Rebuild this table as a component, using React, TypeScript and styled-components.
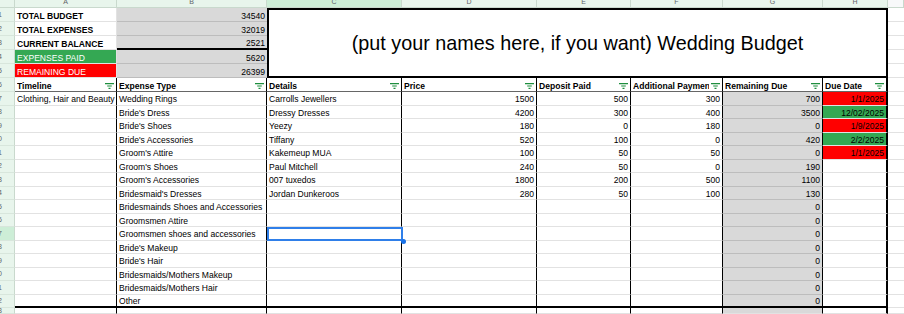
import React from 'react';
import styled, { createGlobalStyle, css } from 'styled-components';

const GlobalStyle = createGlobalStyle`
  html, body { margin: 0; padding: 0; background: #fff; }
  body { font-family: "Liberation Sans", Arial, sans-serif; }
`;

const GRID = '#e2e2e2';
const GREY_LINE = '#bdbdbd';
const GREY_BG = '#d9d9d9';
const GREEN = '#34a853';
const RED = '#ff0000';
const HEAD_BG = '#e8f5ec';
const HEAD_ACTIVE = '#cdeed7';
const HEAD_LINE = '#c9d9cd';

const Sheet = styled.div`
  display: grid;
  grid-template-columns: 15px 102px 150px 135px 135px 94px 92px 100px 65px 1fr;
  grid-template-rows: 8px repeat(6, 14px) repeat(16, 13.5px) 1fr;
  width: 904px;
  height: 314px;
  overflow: hidden;
  font-family: "Liberation Sans", Arial, sans-serif;
  color: #000;
  background: #fff;
`;

const ColHead = styled.div<{ $active?: boolean; $plain?: boolean }>`
  box-sizing: border-box;
  background: ${p => (p.$plain ? '#f8f9fa' : p.$active ? HEAD_ACTIVE : HEAD_BG)};
  border-right: 1px solid ${HEAD_LINE};
  border-bottom: 1px solid ${HEAD_LINE};
  display: flex;
  justify-content: center;
  align-items: flex-start;
  overflow: hidden;
  font-size: 7px;
  line-height: 7px;
  color: #5f6368;
`;

const ColLetter = styled.span`
  margin-top: -2.5px;
`;

const RowHead = styled.div<{ $active?: boolean }>`
  box-sizing: border-box;
  background: ${p => (p.$active ? HEAD_ACTIVE : HEAD_BG)};
  border-right: 1px solid ${HEAD_LINE};
  border-bottom: 1px solid #d8e6dc;
  display: flex;
  justify-content: flex-end;
  align-items: center;
  padding-right: 12px;
  overflow: hidden;
  white-space: nowrap;
  font-size: 7px;
  color: #5f6368;
`;

type CellProps = {
  $bg?: string;
  $align?: 'left' | 'right';
  $bold?: boolean;
  $color?: string;
  $right?: string;
  $bottom?: string;
  $selected?: boolean;
};

const Cell = styled.div<CellProps>`
  box-sizing: border-box;
  display: flex;
  align-items: flex-end;
  justify-content: ${p => (p.$align === 'right' ? 'flex-end' : 'flex-start')};
  padding: 0 2px 0.5px 2px;
  min-width: 0;
  background: ${p => p.$bg || '#fff'};
  color: ${p => p.$color || '#000'};
  font-weight: ${p => (p.$bold ? 700 : 400)};
  font-size: 8.57px;
  white-space: nowrap;
  overflow: hidden;
  border-right: ${p => p.$right || `1px solid ${GRID}`};
  border-bottom: ${p => p.$bottom || `1px solid ${GRID}`};
  ${p =>
    p.$selected &&
    css`
      position: relative;
      overflow: visible;
      z-index: 2;
      &::before {
        content: '';
        position: absolute;
        left: 0;
        top: 0;
        right: -1.5px;
        bottom: -1px;
        border: 2px solid #2f7fe9;
        pointer-events: none;
      }
      &::after {
        content: '';
        position: absolute;
        width: 5px;
        height: 5px;
        border-radius: 50%;
        background: #1a73e8;
        right: -4.5px;
        bottom: -4px;
      }
    `}
`;

const Title = styled.div`
  grid-column: span 6;
  grid-row: span 5;
  box-sizing: border-box;
  border: 2px solid #000;
  display: flex;
  align-items: center;
  justify-content: center;
  font-size: 19.8px;
  white-space: nowrap;
  background: #fff;
`;

const HeadLabel = styled.span`
  flex: 1;
  min-width: 0;
  overflow: hidden;
  white-space: nowrap;
`;

const FilterSvg = styled.svg`
  flex: none;
  display: block;
  margin: 0 0 2px 2px;
`;

const FilterIcon = () => (
  <FilterSvg viewBox="0 0 9 6" width="9" height="6">
    <path d="M0 0.6h9M2.2 3h4.6M3.5 5.4h2" stroke="#1e8e3e" strokeWidth="1.2" fill="none" />
  </FilterSvg>
);

const LETTERS = ['A', 'B', 'C', 'D', 'E', 'F', 'G', 'H'];

const summary = [
  { label: 'TOTAL BUDGET', value: '34540', kind: 'plain' },
  { label: 'TOTAL EXPENSES', value: '32019', kind: 'plain' },
  { label: 'CURRENT BALANCE', value: '2521', kind: 'plain' },
  { label: 'EXPENSES PAID', value: '5620', kind: 'paid' },
  { label: 'REMAINING DUE', value: '26399', kind: 'due' },
];

const headers = [
  'Timeline',
  'Expense Type',
  'Details',
  'Price',
  'Deposit Paid',
  'Additional Payment',
  'Remaining Due',
  'Due Date',
];

type Due = { date: string; ok: boolean } | null;
type Row = { a?: string; b: string; c?: string; d?: string; e?: string; f?: string; g: string; h?: Due };

const rows: Row[] = [
  { a: 'Clothing, Hair and Beauty', b: 'Wedding Rings', c: 'Carrolls Jewellers', d: '1500', e: '500', f: '300', g: '700', h: { date: '1/1/2025', ok: false } },
  { b: "Bride's Dress", c: 'Dressy Dresses', d: '4200', e: '300', f: '400', g: '3500', h: { date: '12/02/2025', ok: true } },
  { b: "Bride's Shoes", c: 'Yeezy', d: '180', e: '0', f: '180', g: '0', h: { date: '1/9/2025', ok: false } },
  { b: "Bride's Accessories", c: 'Tiffany', d: '520', e: '100', f: '0', g: '420', h: { date: '2/2/2025', ok: true } },
  { b: "Groom's Attire", c: 'Kakemeup MUA', d: '100', e: '50', f: '50', g: '0', h: { date: '1/1/2025', ok: false } },
  { b: "Groom's Shoes", c: 'Paul Mitchell', d: '240', e: '50', f: '0', g: '190' },
  { b: "Groom's Accessories", c: '007 tuxedos', d: '1800', e: '200', f: '500', g: '1100' },
  { b: "Bridesmaid's Dresses", c: 'Jordan Dunkeroos', d: '280', e: '50', f: '100', g: '130' },
  { b: 'Bridesmainds Shoes and Accessories', g: '0' },
  { b: 'Groomsmen Attire', g: '0' },
  { b: 'Groomsmen shoes and accessories', g: '0' },
  { b: "Bride's Makeup", g: '0' },
  { b: "Bride's Hair", g: '0' },
  { b: 'Bridesmaids/Mothers Makeup', g: '0' },
  { b: 'Bridesmaids/Mothers Hair', g: '0' },
  { b: 'Other', g: '0' },
];

const BLACK = '1px solid #000';
const THICK = '2px solid #000';
const colRight = (i: number) => (i === 7 ? THICK : BLACK);

export default function App() {
  return (
    <>
      <GlobalStyle />
      <Sheet>
        <ColHead />
        {LETTERS.map(l => (
          <ColHead key={l} $active={l === 'C'}>
            <ColLetter>{l}</ColLetter>
          </ColHead>
        ))}
        <ColHead $plain />

        {summary.map((s, i) => (
          <React.Fragment key={s.label}>
            <RowHead>{i + 1}</RowHead>
            <Cell
              $bold={s.kind === 'plain'}
              $bg={s.kind === 'paid' ? GREEN : s.kind === 'due' ? RED : '#fff'}
              $color={s.kind === 'plain' ? '#000' : '#fff'}
            >
              {s.label}
            </Cell>
            <Cell
              $align="right"
              $bg={GREY_BG}
              $right="none"
              $bottom={i === 2 ? THICK : `1px solid ${GREY_LINE}`}
            >
              {s.value}
            </Cell>
            {i === 0 && <Title>(put your names here, if you want) Wedding Budget</Title>}
            <Cell $right="none" />
          </React.Fragment>
        ))}

        <RowHead>6</RowHead>
        {headers.map((h, i) => (
          <Cell key={h} $bold $right={colRight(i)} $bottom="1px solid #666">
            <HeadLabel>{h}</HeadLabel>
            <FilterIcon />
          </Cell>
        ))}
        <Cell $right="none" />

        {rows.map((r, i) => {
          const n = i + 7;
          const last = n === 22;
          const bottom = last ? THICK : undefined;
          const vals = [r.a, r.b, r.c, r.d, r.e, r.f];
          return (
            <React.Fragment key={n}>
              <RowHead $active={n === 17}>{n}</RowHead>
              {vals.map((v, ci) => (
                <Cell
                  key={ci}
                  $align={ci >= 3 ? 'right' : 'left'}
                  $right={colRight(ci)}
                  $bottom={bottom}
                  $selected={n === 17 && ci === 2}
                >
                  {v}
                </Cell>
              ))}
              <Cell
                $align="right"
                $bg={GREY_BG}
                $right={BLACK}
                $bottom={bottom || `1px solid ${GREY_LINE}`}
              >
                {r.g}
              </Cell>
              <Cell
                $align="right"
                $bg={r.h ? (r.h.ok ? GREEN : RED) : '#fff'}
                $right={THICK}
                $bottom={bottom}
              >
                {r.h?.date}
              </Cell>
              <Cell $right="none" />
            </React.Fragment>
          );
        })}

        <RowHead>23</RowHead>
        {LETTERS.map((l, ci) => (
          <Cell key={l} $right={colRight(ci)} $bg={l === 'G' ? GREY_BG : '#fff'} />
        ))}
        <Cell $right="none" />
      </Sheet>
    </>
  );
}
